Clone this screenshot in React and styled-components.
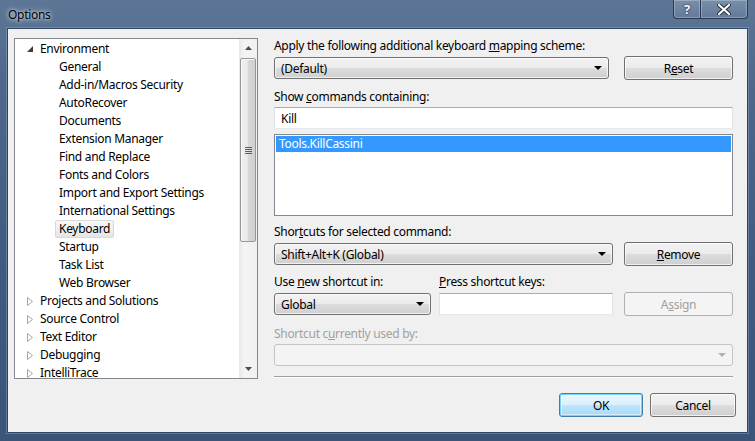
import React from 'react';
import styled, { createGlobalStyle } from 'styled-components';

const GlobalStyle = createGlobalStyle`
  html, body {
    margin: 0;
    padding: 0;
    background: #3f5b80;
  }
  body {
    font-family: "Noto Sans", "Segoe UI", sans-serif;
    font-size: 12px;
    letter-spacing: -0.3px;
    color: #000;
  }
  * {
    box-sizing: border-box;
  }
`;

const Window = styled.div`
  width: 755px;
  height: 441px;
  display: flex;
  flex-direction: column;
  background: linear-gradient(to bottom, #5d7696 0%, #4d6889 20%, #3f5b80 60%, #3a5579 100%);
  overflow: hidden;
`;

const TitleBar = styled.div`
  height: 28px;
  display: flex;
  justify-content: space-between;
  align-items: flex-start;
`;

const TitleText = styled.div`
  padding-left: 8px;
  padding-top: 1px;
  line-height: 28px;
  font-size: 12px;
  color: #000;
  text-shadow: 0 0 6px rgba(255, 255, 255, 0.8), 0 0 3px rgba(255, 255, 255, 0.7);
`;

const TitleButtons = styled.div`
  display: flex;
  margin-right: 7px;
`;

const CaptionButton = styled.div`
  width: ${(p) => p.$width}px;
  height: 19px;
  display: flex;
  align-items: center;
  justify-content: center;
  border: 1px solid #27394f;
  border-top: none;
  border-left: ${(p) => (p.$first ? '1px solid #27394f' : 'none')};
  border-radius: ${(p) => (p.$first ? '0 0 0 4px' : '0 0 4px 0')};
  background: linear-gradient(to bottom, rgba(255, 255, 255, 0.18), rgba(255, 255, 255, 0.05));
  box-shadow: inset 0 0 0 1px rgba(255, 255, 255, 0.25);
  color: #fff;
  font-weight: bold;
  font-size: 13px;
  text-shadow: 0 0 2px #1c2b3c, 0 0 1px #1c2b3c;
`;

const Client = styled.div`
  flex: 1;
  margin: 0 7px 8px 7px;
  border: 1px solid #2e4561;
  box-shadow: 0 0 0 1px rgba(170, 190, 215, 0.35);
  background: #f0f0f0;
  padding: 9px 0 0 6px;
  display: flex;
  flex-direction: column;
`;

const Main = styled.div`
  display: flex;
  align-items: flex-start;
`;

/* ---------- tree ---------- */

const TreeBox = styled.div`
  width: 244px;
  height: 341px;
  border: 1px solid #828790;
  background: #fff;
  display: flex;
`;

const TreeList = styled.div`
  flex: 1;
  overflow: hidden;
  padding-top: 1px;
`;

const TreeRow = styled.div`
  height: 18px;
  display: flex;
  align-items: center;
  padding-left: ${(p) => (p.$level === 0 ? 11 : 44)}px;
  white-space: nowrap;
`;

const Expander = styled.span`
  width: 10px;
  height: 18px;
  display: flex;
  align-items: center;
  justify-content: flex-start;
  padding-left: 1px;
`;

const RowLabel = styled.span`
  line-height: 16px;
  padding: 0 3px;
  border: 1px solid ${(p) => (p.$selected ? '#d9d9d9' : 'transparent')};
  border-radius: 2px;
  background: ${(p) => (p.$selected ? 'linear-gradient(to bottom, #f8f8f8, #e5e5e5)' : 'transparent')};
  margin-left: ${(p) => (p.$level === 0 ? 0 : -4)}px;
`;

const ScrollBar = styled.div`
  width: 18px;
  display: flex;
  flex-direction: column;
  background: linear-gradient(to right, #e8e8e8, #f4f4f4 30%, #f0f0f0);
`;

const ScrollArrow = styled.div`
  height: 18px;
  display: flex;
  align-items: center;
  justify-content: center;
`;

const Thumb = styled.div`
  height: 184px;
  margin: 1px 1px 0 1px;
  border: 1px solid #979797;
  border-radius: 2px;
  background: linear-gradient(to right, #f1f1f1 0%, #e9e9e9 45%, #d6d6d6 55%, #cfcfcf 100%);
  box-shadow: inset 1px 1px 0 #fafafa;
  display: flex;
  align-items: center;
  justify-content: center;
`;

const Grip = styled.div`
  width: 7px;
  height: 7px;
  background: repeating-linear-gradient(to bottom, #5e5e5e 0 1px, transparent 1px 2px);
`;

const Track = styled.div`
  flex: 1;
`;

/* ---------- right panel ---------- */

const Panel = styled.div`
  width: 459px;
  margin-left: 16px;
  display: flex;
  flex-direction: column;
`;

const Label = styled.div`
  height: 16px;
  line-height: 16px;
  margin-top: ${(p) => p.$mt || 0}px;
  width: ${(p) => (p.$width ? `${p.$width}px` : 'auto')};
  color: ${(p) => (p.$disabled ? '#a0a0a0' : '#000')};
  white-space: nowrap;
`;

const LabelRow = styled.div`
  display: flex;
  margin-top: ${(p) => p.$mt || 0}px;
`;

const Row = styled.div`
  display: flex;
  align-items: center;
  height: 24px;
  margin-top: ${(p) => p.$mt || 0}px;
`;

const Combo = styled.div`
  width: ${(p) => p.$width}px;
  height: 22px;
  margin-top: ${(p) => p.$mt || 0}px;
  border: 1px solid ${(p) => (p.$disabled ? '#c5c5c5' : '#707070')};
  border-radius: 3px;
  background: ${(p) =>
    p.$disabled
      ? '#f4f4f4'
      : 'linear-gradient(to bottom, #f2f2f2 0%, #ebebeb 50%, #dddddd 51%, #cfcfcf 100%)'};
  box-shadow: ${(p) => (p.$disabled ? 'none' : 'inset 0 0 0 1px rgba(255,255,255,0.7)')};
  display: flex;
  align-items: center;
  justify-content: space-between;
  padding: 0 6px 0 6px;
  white-space: nowrap;
`;

const Arrow = styled.span`
  width: 0;
  height: 0;
  border-left: 4px solid transparent;
  border-right: 4px solid transparent;
  border-top: 4px solid ${(p) => (p.$disabled ? '#b0b0b0' : '#000')};
`;

const Button = styled.div`
  width: ${(p) => p.$width || 109}px;
  height: 24px;
  margin-left: ${(p) => (p.$push ? 'auto' : `${p.$ml || 0}px`)};
  border: 1px solid ${(p) => (p.$default ? '#3c7fb1' : p.$disabled ? '#adb2b5' : '#707070')};
  border-radius: 3px;
  background: ${(p) =>
    p.$disabled
      ? '#f4f4f4'
      : p.$default
      ? 'linear-gradient(to bottom, #eaf6fd 0%, #d9f0fc 50%, #bee6fd 51%, #a7d9f5 100%)'
      : 'linear-gradient(to bottom, #f2f2f2 0%, #ebebeb 50%, #dddddd 51%, #cfcfcf 100%)'};
  box-shadow: ${(p) =>
    p.$default
      ? 'inset 0 0 0 1px #7fd0f6, inset 0 0 0 2px rgba(255,255,255,0.5)'
      : p.$disabled
      ? 'none'
      : 'inset 0 0 0 1px rgba(255,255,255,0.7)'};
  color: ${(p) => (p.$disabled ? '#a0a0a0' : '#000')};
  display: flex;
  align-items: center;
  justify-content: center;
`;

const TextInput = styled.div`
  width: ${(p) => (p.$width ? `${p.$width}px` : '100%')};
  height: 22px;
  margin-top: ${(p) => p.$mt || 0}px;
  margin-left: ${(p) => p.$ml || 0}px;
  border: 1px solid #abadb3;
  border-left-color: #e2e3ea;
  border-right-color: #e2e3ea;
  border-bottom-color: #e3e9ef;
  background: #fff;
  display: flex;
  align-items: center;
  padding-left: 6px;
`;

const ListBox = styled.div`
  height: 82px;
  margin-top: ${(p) => p.$mt || 0}px;
  border: 1px solid #828790;
  background: #fff;
  padding: 1px;
`;

const ListItem = styled.div`
  height: 16px;
  line-height: 16px;
  padding-left: 3px;
  background: ${(p) => (p.$selected ? '#3399ff' : 'transparent')};
  color: ${(p) => (p.$selected ? '#fff' : '#000')};
`;

const Separator = styled.div`
  height: 1px;
  margin-top: ${(p) => p.$mt || 0}px;
  background: #a0a0a0;
  box-shadow: 0 1px 0 #fff;
`;

const Footer = styled.div`
  display: flex;
  justify-content: flex-end;
  gap: 7px;
  margin-top: 14px;
  padding-right: 11px;
`;

const DownTriangle = ({ color = '#000' }) => (
  <svg width="7" height="4" viewBox="0 0 7 4">
    <path d="M0 0 H7 L3.5 4 Z" fill={color} />
  </svg>
);

const UpTriangle = ({ color = '#000' }) => (
  <svg width="7" height="4" viewBox="0 0 7 4">
    <path d="M0 4 H7 L3.5 0 Z" fill={color} />
  </svg>
);

const OpenGlyph = () => (
  <svg width="6" height="6" viewBox="0 0 6 6">
    <path d="M6 0 V6 H0 Z" fill="#3c3c3c" />
  </svg>
);

const ClosedGlyph = () => (
  <svg width="6" height="9" viewBox="0 0 6 9">
    <path d="M0.5 0.5 L5.5 4.5 L0.5 8.5 Z" fill="none" stroke="#a6a6a6" strokeWidth="1" />
  </svg>
);

const CloseGlyph = () => (
  <svg width="14" height="11" viewBox="0 0 14 11">
    <path d="M2 1 L12 10 M12 1 L2 10" stroke="#1c2b3c" strokeWidth="4" strokeLinecap="round" />
    <path d="M2 1 L12 10 M12 1 L2 10" stroke="#fff" strokeWidth="2.2" strokeLinecap="round" />
  </svg>
);

const tree = [
  { label: 'Environment', level: 0, state: 'open' },
  { label: 'General', level: 1 },
  { label: 'Add-in/Macros Security', level: 1 },
  { label: 'AutoRecover', level: 1 },
  { label: 'Documents', level: 1 },
  { label: 'Extension Manager', level: 1 },
  { label: 'Find and Replace', level: 1 },
  { label: 'Fonts and Colors', level: 1 },
  { label: 'Import and Export Settings', level: 1 },
  { label: 'International Settings', level: 1 },
  { label: 'Keyboard', level: 1, selected: true },
  { label: 'Startup', level: 1 },
  { label: 'Task List', level: 1 },
  { label: 'Web Browser', level: 1 },
  { label: 'Projects and Solutions', level: 0, state: 'closed' },
  { label: 'Source Control', level: 0, state: 'closed' },
  { label: 'Text Editor', level: 0, state: 'closed' },
  { label: 'Debugging', level: 0, state: 'closed' },
  { label: 'IntelliTrace', level: 0, state: 'closed' },
];

const App = () => {
  return (
    <>
      <GlobalStyle />
      <Window>
        <TitleBar>
          <TitleText>Options</TitleText>
          <TitleButtons>
            <CaptionButton $width={28} $first>?</CaptionButton>
            <CaptionButton $width={47}>
              <CloseGlyph />
            </CaptionButton>
          </TitleButtons>
        </TitleBar>
        <Client>
          <Main>
            <TreeBox>
              <TreeList>
                {tree.map((item) => (
                  <TreeRow key={item.label} $level={item.level}>
                    {item.level === 0 && (
                      <Expander>{item.state === 'open' ? <OpenGlyph /> : <ClosedGlyph />}</Expander>
                    )}
                    <RowLabel $level={item.level} $selected={item.selected}>
                      {item.label}
                    </RowLabel>
                  </TreeRow>
                ))}
              </TreeList>
              <ScrollBar>
                <ScrollArrow>
                  <UpTriangle color="#4d4d4d" />
                </ScrollArrow>
                <Thumb>
                  <Grip />
                </Thumb>
                <Track />
                <ScrollArrow>
                  <DownTriangle color="#4d4d4d" />
                </ScrollArrow>
              </ScrollBar>
            </TreeBox>

            <Panel>
              <Label>
                Apply the following additional keyboard <u>m</u>apping scheme:
              </Label>
              <Row $mt={2}>
                <Combo $width={335}>
                  <span>(Default)</span>
                  <Arrow />
                </Combo>
                <Button $push>
                  <span>
                    R<u>e</u>set
                  </span>
                </Button>
              </Row>

              <Label $mt={9}>
                Show <u>c</u>ommands containing:
              </Label>
              <TextInput $mt={2}>Kill</TextInput>
              <ListBox $mt={5}>
                <ListItem $selected>Tools.KillCassini</ListItem>
              </ListBox>

              <Label $mt={8}>
                Shor<u>t</u>cuts for selected command:
              </Label>
              <Row $mt={2}>
                <Combo $width={339}>
                  <span>Shift+Alt+K (Global)</span>
                  <Arrow />
                </Combo>
                <Button $push>
                  <span>
                    <u>R</u>emove
                  </span>
                </Button>
              </Row>

              <LabelRow $mt={8}>
                <Label $width={165}>
                  Use <u>n</u>ew shortcut in:
                </Label>
                <Label>
                  <u>P</u>ress shortcut keys:
                </Label>
              </LabelRow>
              <Row $mt={2}>
                <Combo $width={157}>
                  <span>Global</span>
                  <Arrow />
                </Combo>
                <TextInput $width={174} $ml={8} />
                <Button $push $disabled>
                  <span>
                    A<u>s</u>sign
                  </span>
                </Button>
              </Row>

              <Label $mt={10} $disabled>
                Shortcut c<u>u</u>rrently used by:
              </Label>
              <Combo $width={459} $mt={2} $disabled>
                <span />
                <Arrow $disabled />
              </Combo>
              <Separator $mt={10} />
            </Panel>
          </Main>
          <Footer>
            <Button $width={84} $default>
              OK
            </Button>
            <Button $width={86}>Cancel</Button>
          </Footer>
        </Client>
      </Window>
    </>
  );
};

export default App;
